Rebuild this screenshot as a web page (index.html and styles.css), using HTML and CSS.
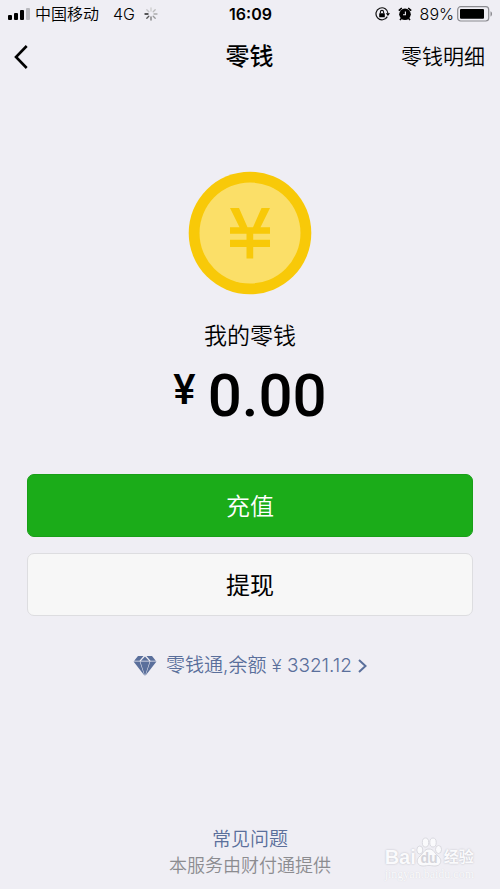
FILE: index.html
```html
<!DOCTYPE html>
<html lang="zh-CN">
<head>
<meta charset="utf-8">
<meta name="viewport" content="width=device-width, initial-scale=1">
<title>零钱</title>
<link rel="stylesheet" href="styles.css">
</head>
<body>
<div class="status">
  <div class="status-left">
    <svg class="signal" width="22" height="12" viewBox="0 0 22 12" aria-hidden="true"><rect x="0" y="7" width="4" height="5" rx="1"/><rect x="6" y="5" width="4" height="7" rx="1"/><rect x="12" y="2" width="4" height="10" rx="1"/><rect x="18" y="0" width="4" height="12" rx="1" fill="#b9b9be"/></svg>
    <span class="carrier">中国移动</span>
    <span class="network">4G</span>
    <svg width="14" height="14" viewBox="0 0 14 14" fill="none" stroke-width="1.3" stroke-linecap="round" aria-hidden="true"><path d="M1 7h3" stroke="#222"/><path d="M2.8 11.2l2-2" stroke="#555"/><path d="M7 13v-3" stroke="#777"/><path d="M11.2 11.2l-2-2" stroke="#999"/><path d="M13 7h-3" stroke="#aaa"/><path d="M11.2 2.8l-2 2" stroke="#bbb"/><path d="M7 1v3" stroke="#ccc"/><path d="M2.8 2.8l2 2" stroke="#c4c4c8"/></svg>
  </div>
  <span class="time">16:09</span>
  <div class="status-right">
    <svg width="15" height="14" viewBox="0 0 15 14" aria-hidden="true"><path d="M12.3 9.6A6 6 0 1 1 13 6.5" fill="none" stroke="#111" stroke-width="1.2"/><path d="M10.8 6.3h4.2l-2.1 2.8z"/><rect x="4.2" y="6.2" width="5.6" height="4" rx=".5"/><path d="M5.4 6.5V5a1.6 1.6 0 0 1 3.2 0v1.5" fill="none" stroke="#111" stroke-width="1.1"/></svg>
    <svg width="14" height="14" viewBox="0 0 14 14" aria-hidden="true"><circle cx="7" cy="7.300" r="5.800"/><path d="M.8 3.600L3.800 1M13.200 3.600L10.200 1M3.300 11.500L2 13M10.700 11.500L12 13" stroke="#000" stroke-width="1.6"/><path d="M7.400 4.500v3.300H5" fill="none" stroke="#efeef4" stroke-width="1.1"/></svg>
    <span>89%</span>
    <svg class="battery" width="36" height="16" viewBox="0 0 36 16" aria-hidden="true"><rect x=".7" y=".7" width="31" height="14.3" rx="3" fill="none" stroke="#8b8b90" stroke-width="1.2"/><rect x="3" y="3" width="24" height="9.700" rx="1"/><path d="M33.5 5.2c2 .8 2 4.5 0 5.3z" fill="#8b8b90"/></svg>
  </div>
</div>
<header class="nav">
  <button class="back" type="button" aria-label="返回"><svg width="14" height="24" viewBox="0 0 14 24" fill="none" stroke="#000" stroke-width="2.6"><path d="M12.7 1L2 12l10.7 11"/></svg></button>
  <h1>零钱</h1>
  <a class="detail" href="#detail">零钱明细</a>
</header>
<main>
  <svg class="coin" width="124" height="124" viewBox="0 0 124 124" aria-hidden="true"><circle cx="62" cy="62" r="61.3" fill="#f8c908"/><circle cx="62" cy="62" r="50.5" fill="#fbdf68"/><path d="M42 37h9L59.500 56.300h5.500L73.500 37H82L72.500 56.300H82v6.500H65.200v6H82V76H65.200v11.500h-6.700V76H42v-7.200h16.500v-6H42v-6.500h9.500z" fill="#f8c908"/></svg>
  <p class="label">我的零钱</p>
  <p class="amount"><span class="yen">¥</span><span>0.00</span></p>
  <div class="actions">
    <button class="btn primary" type="button">充值</button>
    <button class="btn" type="button">提现</button>
  </div>
  <a class="fund" href="#fund">
    <svg width="24" height="20" viewBox="0 0 24 20" fill="#5a6f9b" aria-hidden="true"><path d="M5 0h5.500L6.500 4.800H1.200zM12 .5l4 4.300H8zM13.500 0H19l3.800 4.800h-5.300zM.5 5.500h6.200l4.700 14zM7.300 5.500h9.400L12 20zM17.300 5.500h6.200L12.600 19.500z"/></svg>
    <span class="fund-text">零钱通,余额 <span class="fund-yen">¥</span> 3321.12</span>
    <svg width="9" height="16" viewBox="0 0 9 16" fill="none" stroke="#5a6f9b" stroke-width="2" aria-hidden="true"><path d="M1 2l6.500 6L1 14"/></svg>
  </a>
</main>
<footer>
  <a href="#faq">常见问题</a>
  <p>本服务由财付通提供</p>
  <div class="watermark" aria-hidden="true">
    <div class="brand"><span>Bai</span><svg width="26" height="30" viewBox="0 0 26 30"><g fill="#fafafc" stroke="#d2d2d8" stroke-width=".8"><ellipse cx="3.800" cy="13" rx="3" ry="4"/><ellipse cx="9.500" cy="5.500" rx="3.200" ry="4.500"/><ellipse cx="17" cy="5.500" rx="3.200" ry="4.500"/><ellipse cx="22.500" cy="12.500" rx="3" ry="4"/><path d="M13 12c5 0 5 4 9 7 5 4 3 10-3 10-3 0-4-.6-6-.6s-3 .6-6 .6c-6 0-8-6-3-10 4-3 4-7 9-7z"/></g><text x="13" y="26" text-anchor="middle" class="du">du</text></svg><span class="brand-cn">经验</span></div>
    <div class="site">jingyan.baidu.com</div>
  </div>
</footer>
</body>
</html>
```
FILE: styles.css
```css
* { box-sizing: border-box; }
body {
  margin: 0;
  min-height: 100vh;
  display: flex;
  flex-direction: column;
  background: #efeef4;
  color: #000;
  font-family: Inter, "Noto Sans CJK SC", sans-serif;
  font-weight: 350;
}
h1, p { margin: 0; font-weight: inherit; }
a { text-decoration: none; color: inherit; }
button { font-family: inherit; color: inherit; padding: 0; cursor: pointer; }
svg { display: block; flex: none; }

.status {
  display: grid;
  grid-template-columns: 1fr auto 1fr;
  align-items: center;
  height: 28px;
  padding: 0 7px 0 8px;
  font-size: 16px;
  line-height: 24px;
}
.status-left, .status-right { display: flex; align-items: center; }
.carrier { margin-left: 5px; }
.network { margin: 0 9px 0 14px; }
.time { font-weight: 600; }
.status-right { justify-content: flex-end; gap: 8px; }
.battery { margin-left: -5px; }

.nav {
  display: grid;
  grid-template-columns: 1fr auto 1fr;
  align-items: center;
  height: 58px;
  padding: 0 15px 0 14px;
}
.back { justify-self: start; border: 0; background: none; }
.nav h1 { font-size: 24px; line-height: 36px; font-weight: 500; }
.detail { justify-self: end; font-size: 21px; line-height: 36px; }

main {
  flex: 1;
  display: flex;
  flex-direction: column;
  align-items: center;
  padding: 85px 27px 0;
}
.label { margin-top: 23px; font-size: 23px; line-height: 36px; }
.amount {
  display: flex;
  align-items: flex-start;
  gap: 12px;
  margin-top: 6px;
  font-family: Roboto, sans-serif;
  font-size: 60px;
  line-height: 72px;
  font-weight: 500;
}
.yen { font-size: 42px; line-height: 60px; }
.actions {
  align-self: stretch;
  display: flex;
  flex-direction: column;
  gap: 16px;
  margin-top: 42px;
}
.btn {
  height: 63px;
  padding-bottom: 2px;
  border: 1px solid #dddde0;
  border-radius: 7px;
  background: #f7f7f7;
  font-size: 24px;
}
.primary { background: #1bac19; border-color: #199f18; color: #fff; font-weight: 350; }
.fund {
  display: flex;
  align-items: center;
  margin-top: 34px;
  color: #5a6f9b;
  font-size: 19px;
  line-height: 32px;
}
.fund-text { margin: 0 6px 0 9px; }
.fund-yen { font-family: Roboto, sans-serif; }

footer {
  position: relative;
  padding-bottom: 10px;
  text-align: center;
  font-size: 18px;
  line-height: 26px;
}
footer a { display: block; color: #5a6f9b; font-size: 19px; }
footer p { color: #8c8c90; }
.watermark {
  position: absolute;
  right: 26px;
  bottom: 8px;
  color: #fafafc;
  text-align: left;
  font-family: "Liberation Sans", "Noto Sans CJK SC", sans-serif;
  text-shadow: 0 0 2px #b8b8c0;
}
.brand { display: flex; align-items: flex-end; font-size: 20px; line-height: 20px; font-weight: 700; }
.brand-cn { margin-left: 2px; font-size: 15px; }
.du { font-size: 14px; fill: #d4d4da; text-shadow: none; }
.site { font-family: "Liberation Serif", serif; font-size: 12px; line-height: 14px; text-shadow: 0 0 1px #d0d0d6; }
```
